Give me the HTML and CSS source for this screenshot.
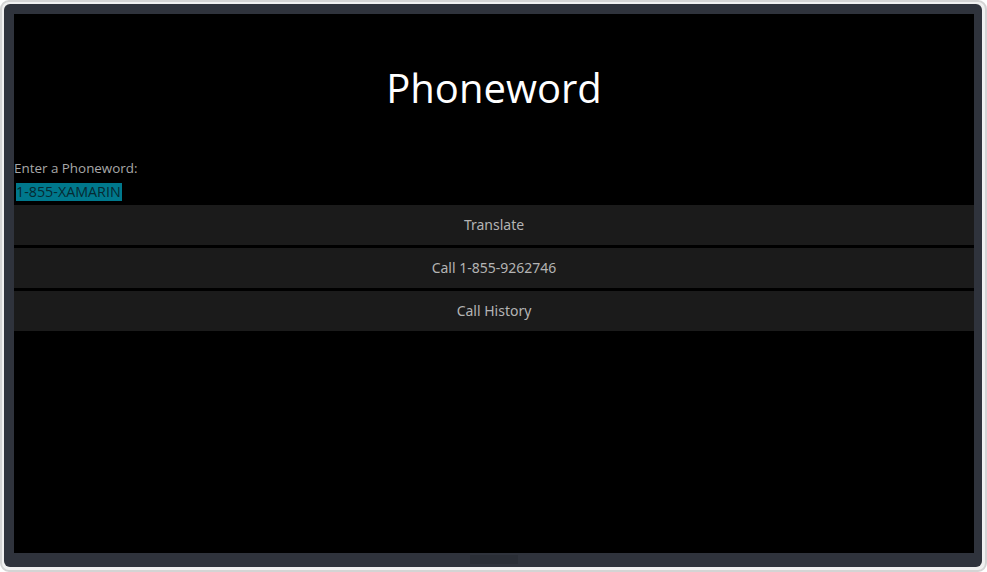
FILE: index.html
```html
<!DOCTYPE html>
<html>
<head>
<meta charset="utf-8">
<link rel="stylesheet" href="styles.css">
</head>
<body>
<div class="device">
  <div class="bezel">
    <div class="screen">
      <h1 class="title">Phoneword</h1>
      <div class="label">Enter a Phoneword:</div>
      <div class="entry"><span class="sel">1-855-XAMARIN</span></div>
      <div class="buttons">
        <div class="btn">Translate</div>
        <div class="btn">Call 1-855-9262746</div>
        <div class="btn">Call History</div>
      </div>
    </div>
    <div class="home"></div>
  </div>
</div>
</body>
</html>
```

FILE: styles.css
```css
html, body {
  margin: 0;
  padding: 0;
  background: #ffffff;
}
.device {
  width: 987px;
  height: 572px;
  box-sizing: border-box;
  border: 2px solid #d4d4d4;
  border-radius: 9px;
  background: #f0f0f0;
  padding: 2px 3px 3px 2px;
}
.bezel {
  height: 100%;
  box-sizing: border-box;
  background: #2f333c;
  border-radius: 6px;
  padding: 10px 8px 3px 10px;
  display: flex;
  flex-direction: column;
  align-items: center;
}
.screen {
  align-self: stretch;
  flex: 1;
  background: #000;
  font-family: "Open Sans", "Noto Sans", sans-serif;
  display: flex;
  flex-direction: column;
}
.title {
  margin: 48px 0 0 0;
  height: 52px;
  line-height: 52px;
  text-align: center;
  color: #fff;
  font-weight: 400;
  font-size: 40px;
  letter-spacing: 0;
}
.label {
  margin-top: 45px;
  color: #a8a8a8;
  font-size: 13.4px;
  line-height: 18px;
}
.entry {
  margin-top: 5px;
  padding-left: 2px;
  height: 18px;
  line-height: 18px;
}
.sel {
  display: inline-block;
  background: #00788c;
  color: #062a32;
  font-size: 14.3px;
  padding: 0 1px 0 0;
  height: 18px;
}
.buttons {
  margin-top: 5px;
  display: flex;
  flex-direction: column;
  gap: 3px;
}
.btn {
  height: 40px;
  line-height: 40px;
  background: #1b1b1b;
  color: #b4b4b4;
  text-align: center;
  font-size: 14px;
  font-family: "Noto Sans", "Open Sans", sans-serif;
}
.home {
  width: 48px;
  height: 9px;
  margin-top: 2px;
  background: #2a2e36;
}
```
